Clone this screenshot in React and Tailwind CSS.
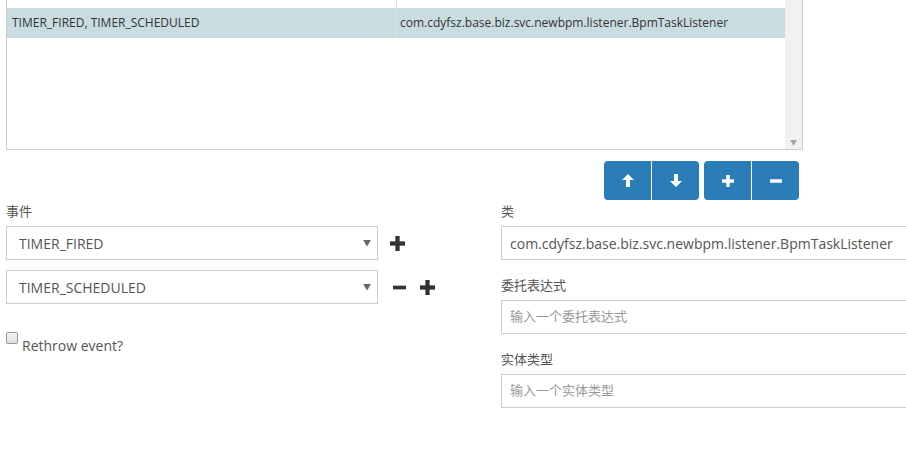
import React from "react";

const font = { fontFamily: '"Open Sans", "Noto Sans CJK SC", sans-serif' };

const Plus = ({ className = "" }) => (
  <svg viewBox="0 0 14 14" className={className} fill="currentColor">
    <rect x="5" y="0" width="4" height="14" />
    <rect x="0" y="5" width="14" height="4" />
  </svg>
);

const Minus = ({ className = "" }) => (
  <svg viewBox="0 0 14 14" className={className} fill="currentColor">
    <rect x="0" y="5" width="14" height="4" />
  </svg>
);

const Arrow = ({ down = false }) => (
  <svg
    viewBox="0 0 12 13"
    className={`w-[12px] h-[13px] ${down ? "rotate-180" : ""}`}
    fill="currentColor"
  >
    <path d="M6 0 L12 6 L8 6 L8 13 L4 13 L4 6 L0 6 Z" />
  </svg>
);

const Select = ({ value }) => (
  <div className="w-[372px] h-[34px] shrink-0 border border-[#cccccc] bg-white flex items-center justify-between pl-[12px] pr-[6px]">
    <span className="text-[14px] text-[#555]">{value}</span>
    <span className="text-[8px] text-[#666]">▼</span>
  </div>
);

const Field = ({ label, value, placeholder }) => (
  <div className="flex flex-col gap-[5px]">
    <label className="h-[20px] leading-[20px] text-[13px] text-[#555]">{label}</label>
    <div className="w-[430px] h-[34px] border border-[#cccccc] bg-white flex items-center px-[8px]">
      {value ? (
        <span className="text-[14px] text-[#555] whitespace-nowrap">{value}</span>
      ) : (
        <span className="text-[13px] text-[#999] whitespace-nowrap">{placeholder}</span>
      )}
    </div>
  </div>
);

export default function App() {
  return (
    <div className="w-[906px] h-[452px] overflow-hidden bg-white pl-[6px]" style={font}>
      {/* listener table */}
      <div className="w-[797px] h-[151px] -mt-px border border-[#cccccc] flex">
        <div className="flex-1 flex flex-col">
          <div className="h-[8px] flex">
            <div className="w-[390px] border-r border-[#dddddd]" />
          </div>
          <div className="h-[30px] bg-[#c9dde1] flex items-center text-[12px] text-[#333]">
            <div className="w-[390px] h-full flex items-center pl-[5px] border-r border-[#d6e3e6]">
              TIMER_FIRED, TIMER_SCHEDULED
            </div>
            <div className="pl-[3px]">com.cdyfsz.base.biz.svc.newbpm.listener.BpmTaskListener</div>
          </div>
        </div>
        <div className="w-[17px] bg-[#f1f1f1] flex flex-col justify-end items-center pb-[3px]">
          <span className="text-[7px] text-[#a3a3a3] leading-none">▼</span>
        </div>
      </div>

      {/* move / add / remove */}
      <div className="w-[797px] flex justify-end gap-[5px] pr-[4px] mt-[11px]">
        <div className="flex rounded-[4px] overflow-hidden bg-[#2b7db7] text-white">
          <div className="w-[48px] h-[39px] flex items-center justify-center border-r border-white">
            <Arrow />
          </div>
          <div className="w-[47px] h-[39px] flex items-center justify-center">
            <Arrow down />
          </div>
        </div>
        <div className="flex rounded-[4px] overflow-hidden bg-[#2b7db7] text-white">
          <div className="w-[48px] h-[39px] flex items-center justify-center border-r border-white">
            <Plus className="w-[12px] h-[12px]" />
          </div>
          <div className="w-[47px] h-[39px] flex items-center justify-center">
            <Minus className="w-[12px] h-[12px]" />
          </div>
        </div>
      </div>

      {/* form */}
      <div className="flex mt-[1px]">
        <div className="w-[495px] shrink-0">
          <label className="block h-[20px] leading-[20px] text-[13px] text-[#555]">事件</label>
          <div className="mt-[5px] flex flex-col gap-[10px]">
            <div className="flex items-center">
              <Select value="TIMER_FIRED" />
              <Plus className="w-[15px] h-[15px] ml-[12px] text-[#333]" />
            </div>
            <div className="flex items-center">
              <Select value="TIMER_SCHEDULED" />
              <Minus className="w-[13px] h-[13px] ml-[15px] text-[#333]" />
              <Plus className="w-[15px] h-[15px] ml-[14px] text-[#333]" />
            </div>
          </div>
          <div className="mt-[26px] flex items-start">
            <span className="mt-[2px] w-[12px] h-[12px] border border-[#999] rounded-[2px] bg-gradient-to-b from-[#f4f4f4] to-[#dedede]" />
            <span className="ml-[4px] mt-[5px] text-[14px] text-[#555]">Rethrow event?</span>
          </div>
        </div>
        <div className="flex flex-col gap-[15px] shrink-0">
          <Field label="类" value="com.cdyfsz.base.biz.svc.newbpm.listener.BpmTaskListener" />
          <Field label="委托表达式" placeholder="输入一个委托表达式" />
          <Field label="实体类型" placeholder="输入一个实体类型" />
        </div>
      </div>
    </div>
  );
}
